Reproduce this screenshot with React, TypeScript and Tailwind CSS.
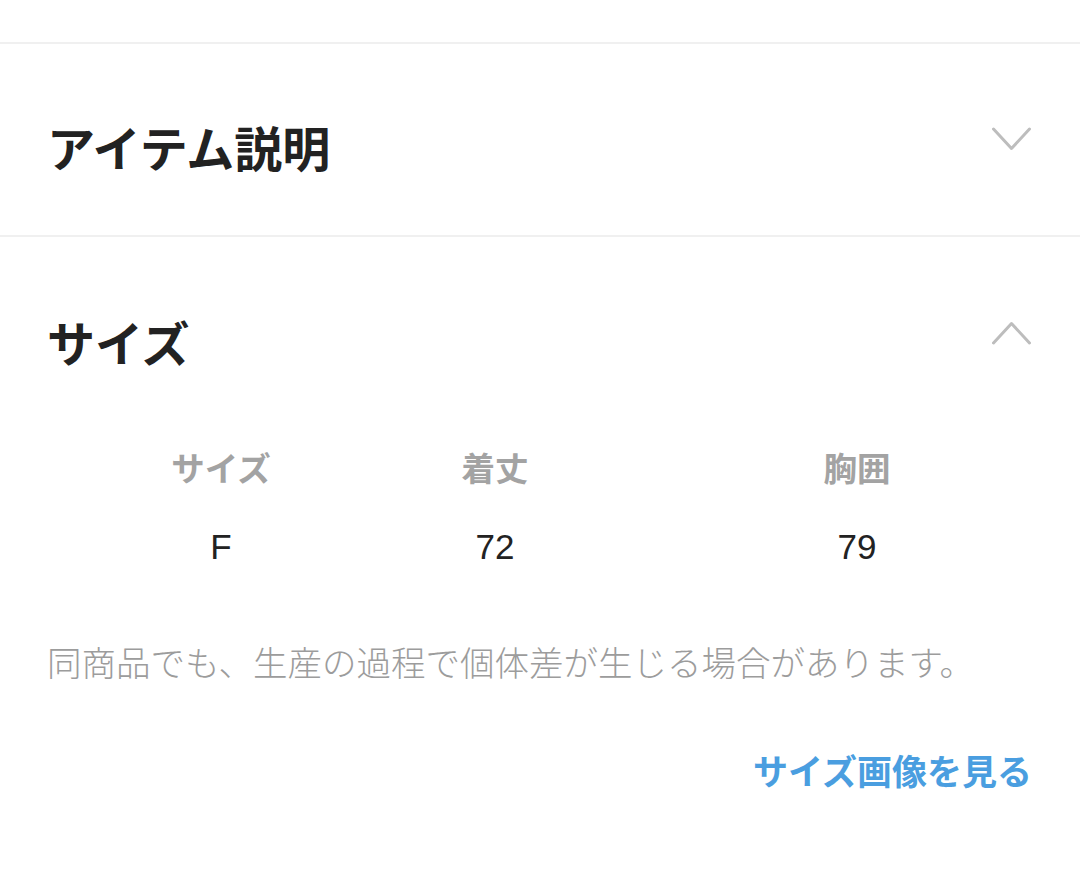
const jp = { fontFamily: '"Noto Sans CJK JP", "Noto Sans", sans-serif' };
const latin = { fontFamily: '"Liberation Sans", Arial, sans-serif' };

function Chevron({ up }: { up?: boolean }) {
  return (
    <svg width="40" height="24" viewBox="0 0 40 24" fill="none" className="shrink-0">
      <polyline
        points={up ? '1.5,22 19.5,2.5 37.5,22' : '1.5,2 19.5,21.5 37.5,2'}
        stroke="#bdbdbd"
        strokeWidth="3"
        strokeLinecap="round"
        strokeLinejoin="round"
      />
    </svg>
  );
}

const columns = [
  { label: 'サイズ', value: 'F' },
  { label: '着丈', value: '72' },
  { label: '胸囲', value: '79' },
];

export default function App() {
  return (
    <div className="min-h-[871px] w-[1080px] bg-white" style={jp}>
      <div className="h-[42px]" />
      <div className="h-[2px] bg-[#f0f0f0]" />

      {/* アイテム説明 (閉じている) */}
      <section className="flex h-[191px] items-start justify-between pl-[47px] pr-[48px]">
        <h2 className="mt-[78px] text-[48px] font-bold leading-none text-[#222]">アイテム説明</h2>
        <div className="mt-[83px]">
          <Chevron />
        </div>
      </section>
      <div className="h-[2px] bg-[#f0f0f0]" />

      {/* サイズ (開いている) */}
      <section className="px-[48px] pb-[80px]">
        <div className="-ml-px flex items-start justify-between">
          <h2 className="mt-[80px] text-[48px] font-bold leading-none text-[#222]">サイズ</h2>
          <div className="mt-[84px]">
            <Chevron up />
          </div>
        </div>

        <div className="mt-[85px] flex">
          {columns.map((c, i) => (
            <div
              key={c.label}
              className={
                'w-[200px] text-center ' + (i === 0 ? 'ml-[73px]' : i === 1 ? 'ml-[74px]' : 'ml-[162px]')
              }
            >
              <div className="text-[33.5px] font-bold leading-none text-[#a3a3a3]">{c.label}</div>
              <div className="mt-[45px] text-[35px] leading-none text-[#222]" style={latin}>
                {c.value}
              </div>
            </div>
          ))}
        </div>

        <p className="-ml-px mt-[80px] text-[34.5px] font-light leading-none text-[#9c9c9c]">
          同商品でも、生産の過程で個体差が生じる場合があります。
        </p>

        <div className="mt-[74px] text-right">
          <a className="text-[35px] font-bold leading-none text-[#4a9ee0]">サイズ画像を見る</a>
        </div>
      </section>
    </div>
  );
}
